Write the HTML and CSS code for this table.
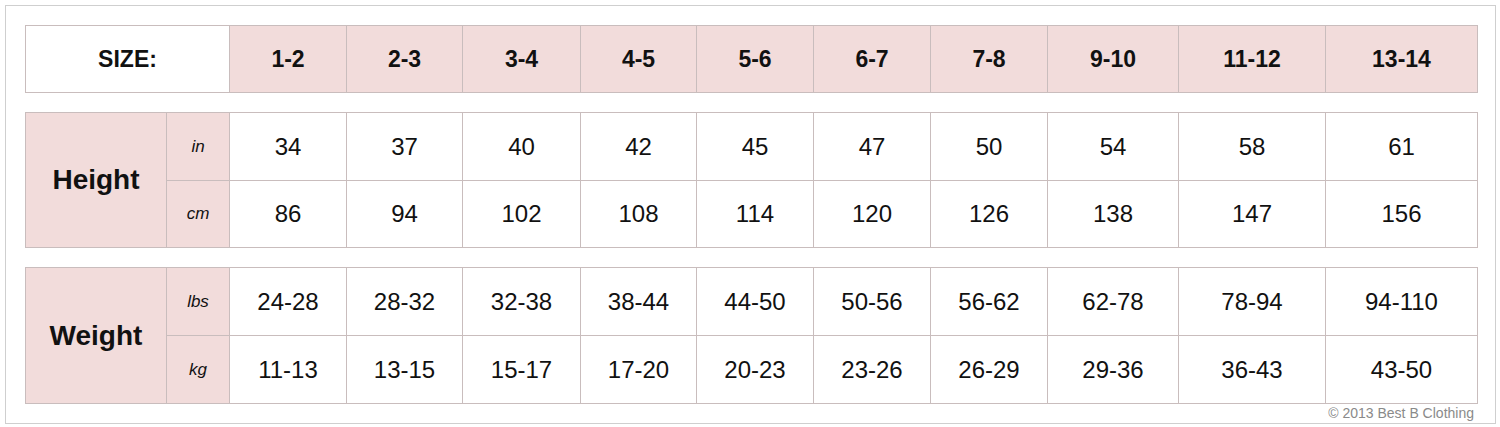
FILE: index.html
```html
<!DOCTYPE html>
<html>
<head>
<meta charset="utf-8">
<link rel="stylesheet" href="styles.css">
</head>
<body>
<div class="frame">
  <table class="chart size">
    <colgroup>
      <col class="c-label"><col class="c1"><col class="c2"><col class="c3"><col class="c4"><col class="c5"><col class="c6"><col class="c7"><col class="c8"><col class="c9"><col class="c10">
    </colgroup>
    <tr class="r-head">
      <th class="size-label">SIZE:</th>
      <th class="pink">1-2</th><th class="pink">2-3</th><th class="pink">3-4</th><th class="pink">4-5</th><th class="pink">5-6</th><th class="pink">6-7</th><th class="pink">7-8</th><th class="pink">9-10</th><th class="pink">11-12</th><th class="pink">13-14</th>
    </tr>
  </table>

  <table class="chart block">
    <colgroup>
      <col class="c-name"><col class="c-unit"><col class="c1"><col class="c2"><col class="c3"><col class="c4"><col class="c5"><col class="c6"><col class="c7"><col class="c8"><col class="c9"><col class="c10">
    </colgroup>
    <tr class="r-a">
      <th class="name pink" rowspan="2">Height</th>
      <td class="unit pink">in</td>
      <td>34</td><td>37</td><td>40</td><td>42</td><td>45</td><td>47</td><td>50</td><td>54</td><td>58</td><td>61</td>
    </tr>
    <tr class="r-b">
      <td class="unit pink">cm</td>
      <td>86</td><td>94</td><td>102</td><td>108</td><td>114</td><td>120</td><td>126</td><td>138</td><td>147</td><td>156</td>
    </tr>
  </table>

  <table class="chart block">
    <colgroup>
      <col class="c-name"><col class="c-unit"><col class="c1"><col class="c2"><col class="c3"><col class="c4"><col class="c5"><col class="c6"><col class="c7"><col class="c8"><col class="c9"><col class="c10">
    </colgroup>
    <tr class="r-c">
      <th class="name pink" rowspan="2">Weight</th>
      <td class="unit pink">lbs</td>
      <td>24-28</td><td>28-32</td><td>32-38</td><td>38-44</td><td>44-50</td><td>50-56</td><td>56-62</td><td>62-78</td><td>78-94</td><td>94-110</td>
    </tr>
    <tr class="r-c">
      <td class="unit pink">kg</td>
      <td>11-13</td><td>13-15</td><td>15-17</td><td>17-20</td><td>20-23</td><td>23-26</td><td>26-29</td><td>29-36</td><td>36-43</td><td>43-50</td>
    </tr>
  </table>
  <div class="copy">© 2013 Best B Clothing</div>
</div>
</body>
</html>
```

FILE: styles.css
```css
html, body {
  margin: 0;
  padding: 0;
  background: #fff;
}
body {
  width: 1500px;
  height: 427px;
  overflow: hidden;
  font-family: "Liberation Sans", Arial, sans-serif;
  color: #111;
}
.frame {
  margin: 5px 0 0 5px;
  width: 1470px;
  height: 398px;
  border: 1px solid #cfcfcf;
  padding: 19px 0 0 19px;
}
.chart {
  border-collapse: collapse;
  table-layout: fixed;
  width: 1453px;
}
.chart td, .chart th {
  border: 1px solid #c9bdbd;
  padding: 0;
  text-align: center;
  vertical-align: middle;
}
.c-label { width: 204px; }
.c-name { width: 141px; }
.c-unit { width: 63px; }
.c1 { width: 117px; }
.c2 { width: 116px; }
.c3 { width: 118px; }
.c4 { width: 116px; }
.c5 { width: 117px; }
.c6 { width: 117px; }
.c7 { width: 117px; }
.c8 { width: 131px; }
.c9 { width: 147px; }
.c10 { width: 152px; }
.pink { background: #f2dcdb; }
.size th {
  font-size: 23px;
  font-weight: bold;
  height: 66px;
}
.size .size-label {
  background: #fff;
}
.block {
  margin-top: 19px;
}
.block td {
  font-size: 24px;
}
.r-a td { height: 67px; }
.r-b td { height: 66px; }
.r-c td { height: 67px; }
.block .unit {
  font-style: italic;
  font-size: 17px;
}
.block .name {
  font-size: 28px;
  font-weight: bold;
}
.copy {
  width: 1449px;
  text-align: right;
  font-size: 14px;
  color: #8a8a8a;
  margin-top: 1px;
}
```
